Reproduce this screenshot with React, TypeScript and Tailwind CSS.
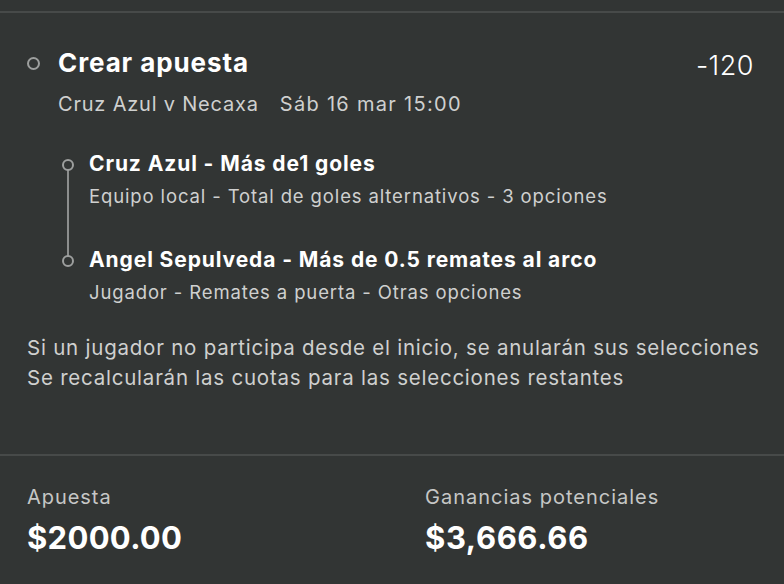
import React from "react";

const font = { fontFamily: "Inter, 'Noto Sans', sans-serif" };

export default function App() {
  return (
    <div className="w-[784px] h-[584px] bg-[#323534] text-white overflow-hidden" style={font}>
      <div className="h-[11px]" />
      <div className="h-[2px] bg-[#474a49]" />
      <div className="pl-[27px] pr-[30px]">
        {/* header */}
        <div className="flex items-start mt-[34px]">
          <div className="w-[31px] pt-[10px] flex">
            <div className="w-[13px] h-[13px] rounded-full border-2 border-[#9d9f9e]" />
          </div>
          <div className="flex-1">
            <div className="text-[26px] leading-[32px] font-bold tracking-[0.9px]">Crear apuesta</div>
            <div className="text-[20px] leading-[24px] mt-[13px] text-[#cfd0cf] flex gap-[21px]">
              <span className="tracking-[0.8px]">Cruz Azul v Necaxa</span>
              <span className="tracking-[1.3px]">Sáb 16 mar 15:00</span>
            </div>
          </div>
          <div className="text-[27px] leading-[32px] font-light pt-[3px] text-white tracking-[0.5px]">-120</div>
        </div>

        {/* selections */}
        <div className="mt-[35px] ml-[35px] relative">
          <div className="absolute left-[5px] top-[13px] h-[96px] w-[2px] bg-[#8c8e8d]" />
          <div className="flex">
            <div className="w-[27px] pt-[8px] relative">
              <div className="w-[12px] h-[12px] rounded-full border-2 border-[#9d9f9e] bg-[#323534]" />
            </div>
            <div>
              <div className="text-[21px] leading-[26px] font-bold tracking-[0.9px]">Cruz Azul - Más de1 goles</div>
              <div className="text-[18.5px] leading-[24px] mt-[7px] text-[#cfd0cf] tracking-[0.87px]">
                Equipo local - Total de goles alternativos - 3 opciones
              </div>
            </div>
          </div>
          <div className="flex mt-[39px]">
            <div className="w-[27px] pt-[8px] relative">
              <div className="w-[12px] h-[12px] rounded-full border-2 border-[#9d9f9e] bg-[#323534]" />
            </div>
            <div>
              <div className="text-[21px] leading-[26px] font-bold tracking-[0.9px]">Angel Sepulveda - Más de 0.5 remates al arco</div>
              <div className="text-[18.5px] leading-[24px] mt-[7px] text-[#cfd0cf] tracking-[0.87px]">
                Jugador - Remates a puerta - Otras opciones
              </div>
            </div>
          </div>
        </div>

        {/* info */}
        <div className="mt-[29px] text-[20.5px] leading-[30px] text-[#cfd0cf] tracking-[0.77px] whitespace-nowrap">
          <div>Si un jugador no participa desde el inicio, se anularán sus selecciones</div>
          <div>Se recalcularán las cuotas para las selecciones restantes</div>
        </div>
      </div>

      <div className="mt-[61px] h-[2px] bg-[#474a49]" />

      <div className="flex pl-[27px] mt-[29px]">
        <div className="w-[398px]">
          <div className="text-[20px] leading-[24px] text-[#c6c7c6] tracking-[0.95px]">Apuesta</div>
          <div className="text-[31px] leading-[36px] font-bold mt-[11px] tracking-[0.3px]">$2000.00</div>
        </div>
        <div>
          <div className="text-[20px] leading-[24px] text-[#c6c7c6] tracking-[1px]">Ganancias potenciales</div>
          <div className="text-[31px] leading-[36px] font-bold mt-[11px] tracking-[0.6px]">$3,666.66</div>
        </div>
      </div>
    </div>
  );
}
